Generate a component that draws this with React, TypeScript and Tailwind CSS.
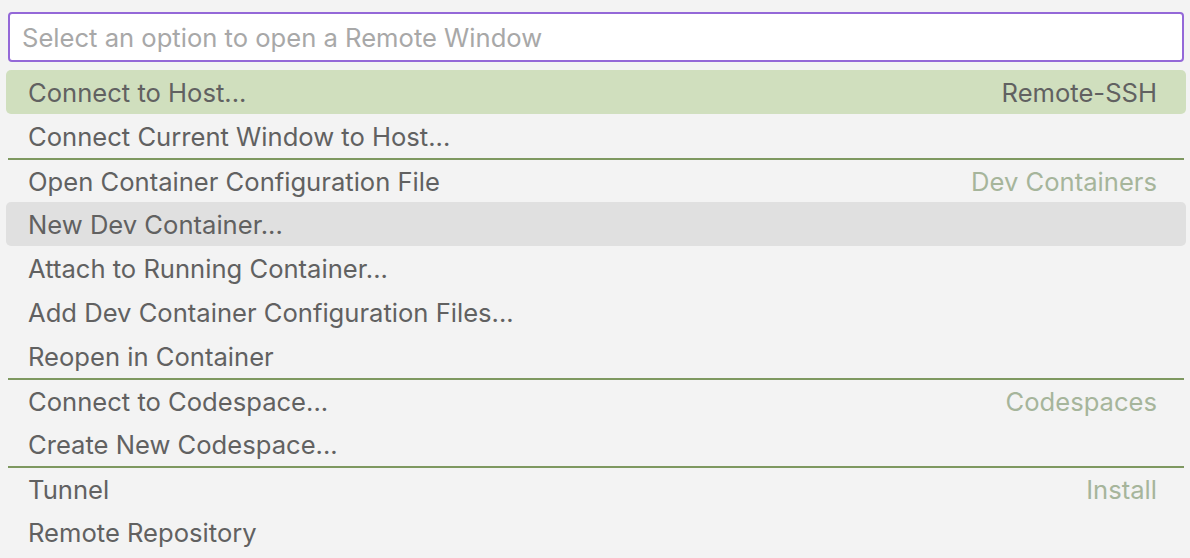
import React from "react";

interface Item {
  label: string;
  detail?: string;
  separator?: boolean;
}

const items: Item[] = [
  { label: "Connect to Host...", detail: "Remote-SSH" },
  { label: "Connect Current Window to Host..." },
  { label: "Open Container Configuration File", detail: "Dev Containers", separator: true },
  { label: "New Dev Container..." },
  { label: "Attach to Running Container..." },
  { label: "Add Dev Container Configuration Files..." },
  { label: "Reopen in Container" },
  { label: "Connect to Codespace...", detail: "Codespaces", separator: true },
  { label: "Create New Codespace..." },
  { label: "Tunnel", detail: "Install", separator: true },
  { label: "Remote Repository" },
];

export default function App() {
  const active = 0;
  const hovered = 3;

  return (
    <div
      className="w-[1190px] h-[558px] overflow-hidden bg-[#f3f3f3] pt-[12px]"
      style={{ fontFamily: "Inter, 'Noto Sans', sans-serif" }}
    >
      {/* Input */}
      <div className="ml-[8px] mr-[6px] h-[50px] rounded-[4px] border-2 border-[#9468d8] bg-white pl-[12px] pt-[3px] flex items-center">
        <span className="text-[25.6px] text-[#a8a8a8]">
          Select an option to open a Remote Window
        </span>
      </div>

      {/* List */}
      <div className="ml-[6px] mr-[4px] mt-[8px]">
        {items.map((item, i) => (
          <div key={i}>
            {item.separator && <div className="mx-[2px] h-[2px] bg-[#7e9860]" />}
            <div
              className={`${item.separator ? "h-[42px]" : "h-[44px]"} flex items-center justify-between rounded-[5px] pl-[22px] pr-[29px] pt-[3px] text-[25.6px] ${
                i === active ? "bg-[#d0dfbe]" : i === hovered ? "bg-[#e0e0e0]" : ""
              }`}
            >
              <span className="text-[#616161]">{item.label}</span>
              {item.detail && (
                <span className={i === active ? "text-[#616161]" : "text-[#a6b59b]"}>
                  {item.detail}
                </span>
              )}
            </div>
          </div>
        ))}
      </div>
    </div>
  );
}
